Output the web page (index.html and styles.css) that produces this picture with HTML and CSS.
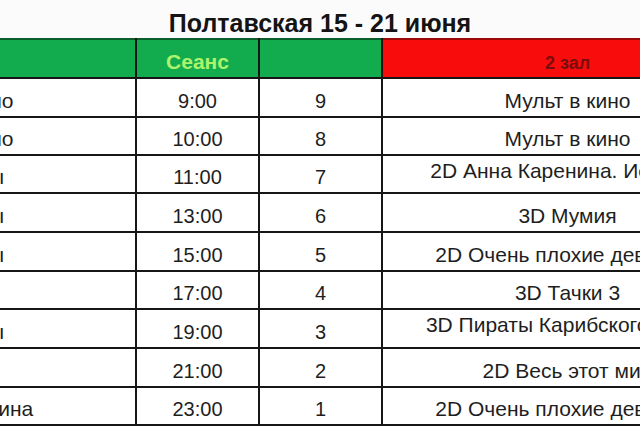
FILE: index.html
```html
<!DOCTYPE html>
<html lang="ru">
<head>
<meta charset="utf-8">
<title>Полтавская 15 - 21 июня</title>
<link rel="stylesheet" href="styles.css">
</head>
<body>
<h1 class="title">Полтавская 15 - 21 июня</h1>
<div class="sheet">
  <div class="hd green"><span class="hd-text">1 зал</span></div>
  <div class="hd green"><span class="hd-text lime">Сеанс</span></div>
  <div class="hd green"></div>
  <div class="hd red"><span class="hd-text dark">2 зал</span></div>

  <div class="cell film">Мульт в кино</div><div class="cell">9:00</div><div class="cell">9</div><div class="cell film">Мульт в кино</div>
  <div class="cell film">Мульт в кино</div><div class="cell">10:00</div><div class="cell">8</div><div class="cell film">Мульт в кино</div>
  <div class="cell film">3D Пираты</div><div class="cell">11:00</div><div class="cell">7</div><div class="cell film wrap">2D Анна Каренина. История<br>Вронского</div>
  <div class="cell film">2D Пираты</div><div class="cell">13:00</div><div class="cell">6</div><div class="cell film">3D Мумия</div>
  <div class="cell film">3D Пираты</div><div class="cell">15:00</div><div class="cell">5</div><div class="cell film">2D Очень плохие девчонки</div>
  <div class="cell film">3D Мумия</div><div class="cell">17:00</div><div class="cell">4</div><div class="cell film">3D Тачки 3</div>
  <div class="cell film">2D Пираты</div><div class="cell">19:00</div><div class="cell">3</div><div class="cell film wrap">3D Пираты Карибского моря:<br>Мертвецы не рассказывают сказки</div>
  <div class="cell film">2D Мумия</div><div class="cell">21:00</div><div class="cell">2</div><div class="cell film">2D Весь этот мир</div>
  <div class="cell film">2D Наша Родина</div><div class="cell">23:00</div><div class="cell">1</div><div class="cell film">2D Очень плохие девчонки</div>
</div>
</body>
</html>
```
FILE: styles.css
```css
html, body {
  margin: 0;
  padding: 0;
  width: 640px;
  height: 426px;
  overflow: hidden;
  background: #ffffff;
  font-family: "Liberation Sans", Arial, sans-serif;
  color: #1e1e1e;
}

.title {
  margin: 0;
  height: 38px;
  box-sizing: border-box;
  padding-top: 8px;
  font-size: 25px;
  line-height: 30px;
  font-weight: bold;
  text-align: center;
  color: #141414;
  background: #fbfbfb;
}

.sheet {
  display: grid;
  margin-left: -234px;
  width: 986px;
  grid-template-columns: 369px 121px 121px 369px;
  grid-template-rows: 39px 37px 36px 36px 37px 37px 36px 37px 37px 36px;
  column-gap: 2px;
  row-gap: 2px;
  background: #161616;
  padding-bottom: 2px;
}

.hd {
  display: flex;
  justify-content: center;
  align-items: flex-end;
  padding-bottom: 4px;
  box-sizing: border-box;
  white-space: nowrap;
}

.green {
  background: #12ab4e;
  border-top: 2px solid #0b5e2c;
}

.red {
  background: #f80c0c;
  border-top: 2px solid #9a0808;
  padding-bottom: 3px;
}

.hd-text {
  font-weight: bold;
  font-size: 20px;
  line-height: 23px;
}

.lime {
  color: #acf46c;
  font-size: 21px;
}

.dark {
  color: #7c0c0c;
  font-size: 18px;
  line-height: 21px;
}

.cell {
  display: flex;
  justify-content: center;
  align-items: flex-end;
  padding-bottom: 3px;
  box-sizing: border-box;
  background: #ffffff;
  font-size: 20px;
  line-height: 23px;
  white-space: nowrap;
  overflow: hidden;
}

.film {
  font-size: 21px;
  line-height: 24px;
  text-align: center;
}

.wrap {
  align-items: flex-start;
  padding-bottom: 0;
  line-height: 29px;
}
```
